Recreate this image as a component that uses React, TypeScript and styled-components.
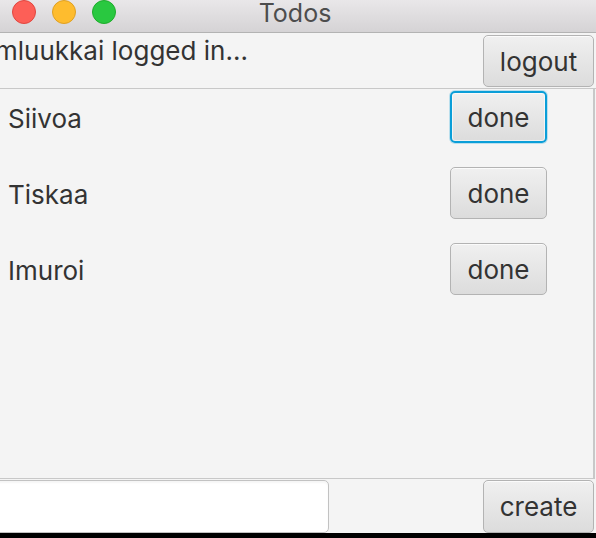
import React from "react";
import styled, { createGlobalStyle, css } from "styled-components";

const Global = createGlobalStyle`
  html, body {
    margin: 0;
    padding: 0;
    background: #000;
  }
  * { box-sizing: border-box; }
`;

const FONT = `Inter, "Noto Sans", "Liberation Sans", sans-serif`;

const Window = styled.div`
  width: 596px;
  height: 533px;
  background: #f4f4f4;
  display: flex;
  flex-direction: column;
  overflow: hidden;
  font-family: ${FONT};
  color: #333;
`;

const TitleBar = styled.div`
  height: 33px;
  flex: none;
  display: grid;
  grid-template-columns: 1fr auto 1fr;
  align-items: start;
  background: linear-gradient(#e9e7e9, #d5d3d5);
  border-bottom: 1px solid #b3b3b3;
`;

const Lights = styled.div`
  display: flex;
  gap: 16px;
  padding-left: 12px;
`;

const Light = styled.span<{ $fill: string; $edge: string }>`
  width: 24px;
  height: 24px;
  border-radius: 50%;
  background: ${(p) => p.$fill};
  border: 1px solid ${(p) => p.$edge};
`;

const Title = styled.div`
  font-size: 25px;
  line-height: 28px;
  margin-top: -1px;
  color: #4d4d4d;
  margin-right: 6px;
`;

const TopBar = styled.div`
  height: 56px;
  flex: none;
  display: flex;
  justify-content: space-between;
  align-items: flex-start;
  padding-right: 2px;
  border-bottom: 1px solid #c8c8c8;
`;

const UserLabel = styled.div`
  font-size: 26px;
  margin-left: -5px;
  padding-top: 2px;
  white-space: nowrap;
`;

const buttonBase = css`
  font-family: ${FONT};
  font-size: 26px;
  color: #333;
  height: 52px;
  padding: 0;
  border-radius: 5px;
  border: 1px solid #b3b3b3;
  background: linear-gradient(#f0f0f0, #dcdcdc);
  box-shadow: inset 0 1px 0 rgba(255, 255, 255, 0.7);
  display: flex;
  align-items: center;
  justify-content: center;
  flex: none;
`;

const WideButton = styled.button`
  ${buttonBase};
  width: 111px;
  margin-top: 2px;
`;

const List = styled.div`
  flex: 1;
  display: flex;
  flex-direction: column;
  gap: 24px;
  padding: 2px 0 0 8px;
  border-bottom: 1px solid #c8c8c8;
  border-right: 2px solid #c8c8c8;
  margin-right: 1px;
`;

const Row = styled.div`
  display: grid;
  grid-template-columns: 442px 97px;
  align-items: center;
`;

const ItemLabel = styled.div`
  font-size: 26px;
  padding-top: 3px;
`;

const DoneButton = styled.button<{ $focused?: boolean }>`
  ${buttonBase};
  width: 97px;
  ${(p) =>
    p.$focused &&
    css`
      border: 2px solid #0a9ed8;
      box-shadow: 0 0 0 1px rgba(10, 158, 216, 0.25),
        inset 0 0 0 1px rgba(255, 255, 255, 0.6);
    `}
`;

const BottomBar = styled.div`
  height: 54px;
  flex: none;
  display: flex;
  justify-content: space-between;
  align-items: flex-end;
  padding-right: 2px;
`;

const TextInput = styled.input`
  width: 340px;
  height: 53px;
  margin-left: -11px;
  border: 1px solid #c2c2c2;
  border-radius: 5px;
  background: #fff;
  box-shadow: inset 0 2px 2px rgba(0, 0, 0, 0.04);
  font-family: ${FONT};
  font-size: 26px;
  outline: none;
`;

const BottomButton = styled(WideButton)`
  height: 53px;
  margin-top: 0;
`;

const todos = ["Siivoa", "Tiskaa", "Imuroi"];

export default function App() {
  return (
    <>
      <Global />
      <Window>
        <TitleBar>
          <Lights>
            <Light $fill="#fd5f57" $edge="#e1463f" />
            <Light $fill="#febc2e" $edge="#dfa023" />
            <Light $fill="#29c840" $edge="#1eac2b" />
          </Lights>
          <Title>Todos</Title>
          <div />
        </TitleBar>
        <TopBar>
          <UserLabel>mluukkai logged in...</UserLabel>
          <WideButton>logout</WideButton>
        </TopBar>
        <List>
          {todos.map((t, i) => (
            <Row key={t}>
              <ItemLabel>{t}</ItemLabel>
              <DoneButton $focused={i === 0}>done</DoneButton>
            </Row>
          ))}
        </List>
        <BottomBar>
          <TextInput />
          <BottomButton>create</BottomButton>
        </BottomBar>
      </Window>
    </>
  );
}
